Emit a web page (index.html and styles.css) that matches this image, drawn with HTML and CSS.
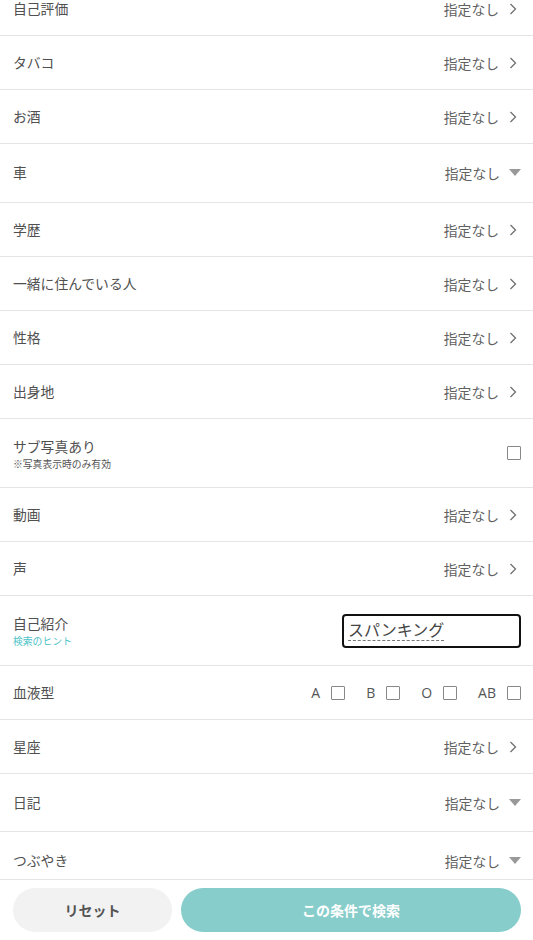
FILE: index.html
```html
<!DOCTYPE html>
<html lang="ja">
<head>
<meta charset="utf-8">
<link rel="stylesheet" href="styles.css">
</head>
<body>
<div class="page">
  <main class="list">
    <div class="row"><span class="label">自己評価</span><span class="value">指定なし<svg class="chev" viewBox="0 0 8 12"><path d="M1.5 1 L6.5 6 L1.5 11"/></svg></span></div>
    <div class="row"><span class="label">タバコ</span><span class="value">指定なし<svg class="chev" viewBox="0 0 8 12"><path d="M1.5 1 L6.5 6 L1.5 11"/></svg></span></div>
    <div class="row"><span class="label">お酒</span><span class="value">指定なし<svg class="chev" viewBox="0 0 8 12"><path d="M1.5 1 L6.5 6 L1.5 11"/></svg></span></div>
    <div class="row tall"><span class="label">車</span><span class="value">指定なし<svg class="tri" viewBox="0 0 12 8"><path d="M0 0 H12 L6 7 Z"/></svg></span></div>
    <div class="row"><span class="label">学歴</span><span class="value">指定なし<svg class="chev" viewBox="0 0 8 12"><path d="M1.5 1 L6.5 6 L1.5 11"/></svg></span></div>
    <div class="row"><span class="label">一緒に住んでいる人</span><span class="value">指定なし<svg class="chev" viewBox="0 0 8 12"><path d="M1.5 1 L6.5 6 L1.5 11"/></svg></span></div>
    <div class="row"><span class="label">性格</span><span class="value">指定なし<svg class="chev" viewBox="0 0 8 12"><path d="M1.5 1 L6.5 6 L1.5 11"/></svg></span></div>
    <div class="row"><span class="label">出身地</span><span class="value">指定なし<svg class="chev" viewBox="0 0 8 12"><path d="M1.5 1 L6.5 6 L1.5 11"/></svg></span></div>
    <div class="row double">
      <div class="labels"><span class="label">サブ写真あり</span><span class="note">※写真表示時のみ有効</span></div>
      <span class="box"></span>
    </div>
    <div class="row"><span class="label">動画</span><span class="value">指定なし<svg class="chev" viewBox="0 0 8 12"><path d="M1.5 1 L6.5 6 L1.5 11"/></svg></span></div>
    <div class="row"><span class="label">声</span><span class="value">指定なし<svg class="chev" viewBox="0 0 8 12"><path d="M1.5 1 L6.5 6 L1.5 11"/></svg></span></div>
    <div class="row double intro">
      <div class="labels"><span class="label">自己紹介</span><span class="hint">検索のヒント</span></div>
      <div class="input"><span class="ime">スパンキング</span></div>
    </div>
    <div class="row">
      <span class="label">血液型</span>
      <div class="blood">
        <span class="opt">A<span class="box"></span></span>
        <span class="opt">B<span class="box"></span></span>
        <span class="opt">O<span class="box"></span></span>
        <span class="opt">AB<span class="box"></span></span>
      </div>
    </div>
    <div class="row"><span class="label">星座</span><span class="value">指定なし<svg class="chev" viewBox="0 0 8 12"><path d="M1.5 1 L6.5 6 L1.5 11"/></svg></span></div>
    <div class="row tall2"><span class="label">日記</span><span class="value">指定なし<svg class="tri" viewBox="0 0 12 8"><path d="M0 0 H12 L6 7 Z"/></svg></span></div>
    <div class="row tall2"><span class="label">つぶやき</span><span class="value">指定なし<svg class="tri" viewBox="0 0 12 8"><path d="M0 0 H12 L6 7 Z"/></svg></span></div>
  </main>
  <footer class="footer">
    <button class="btn reset">リセット</button>
    <button class="btn search">この条件で検索</button>
  </footer>
</div>
</body>
</html>
```
FILE: styles.css
```css
* { box-sizing: border-box; }
html, body { margin: 0; padding: 0; }
body {
  font-family: "Noto Sans CJK JP", "Noto Sans", sans-serif;
  color: #555;
  background: #fff;
}
.page {
  height: 940px;
  display: flex;
  flex-direction: column;
}
.list {
  flex: 1;
  overflow: hidden;
}
.list > .row:first-child { margin-top: -18px; }
.row {
  height: 54px;
  border-bottom: 1px solid #e4e4e4;
  display: flex;
  align-items: center;
  justify-content: space-between;
  padding: 0 12px 0 13px;
}
.row.tall { height: 59px; }
.row.tall2 { height: 58px; }
.row.double { height: 69px; }
.row.intro { height: 70px; }
.label {
  font-size: 13.8px;
  color: #505050;
  line-height: 1.4;
}
.value {
  display: flex;
  align-items: center;
  font-size: 13.8px;
  color: #606060;
}
.chev {
  width: 8px;
  height: 12px;
  margin-left: 10px;
  margin-right: 4px;
  fill: none;
  stroke: #707070;
  stroke-width: 1.3;
}
.tri {
  width: 12px;
  height: 8px;
  margin-left: 9px;
  fill: #999;
}
.labels {
  display: flex;
  flex-direction: column;
  gap: 1px;
}
.labels .label { line-height: 20px; }
.note {
  font-size: 9.8px;
  color: #555;
  line-height: 14px;
}
.hint {
  font-size: 9.8px;
  color: #4cc3c7;
  line-height: 14px;
}
.box {
  display: inline-block;
  width: 14px;
  height: 14px;
  border: 1px solid #888;
  border-radius: 1px;
  background: #fff;
}
.input {
  width: 179px;
  height: 34px;
  border: 2px solid #111;
  border-radius: 4px;
  display: flex;
  align-items: center;
  padding: 0 4px;
}
.ime {
  font-size: 16px;
  color: #444;
  line-height: 1.2;
  border-bottom: 1px dashed #777;
}
.blood {
  display: flex;
  align-items: center;
  gap: 21px;
}
.opt {
  display: flex;
  align-items: center;
  gap: 11px;
  font-family: "Open Sans", "Noto Sans", sans-serif;
  font-size: 14px;
  color: #555;
}
.footer {
  flex: 0 0 61px;
  border-top: 1px solid #e4e4e4;
  display: flex;
  gap: 9px;
  padding: 8px 12px 0 13px;
  background: #fff;
}
.btn {
  height: 44px;
  border: 0;
  border-radius: 22px;
  font-family: "Noto Sans CJK JP", sans-serif;
  font-weight: bold;
  font-size: 14px;
}
.reset {
  width: 159px;
  background: #f2f2f2;
  color: #555;
}
.search {
  flex: 1;
  background: #87cdcb;
  color: #fff;
}
```
